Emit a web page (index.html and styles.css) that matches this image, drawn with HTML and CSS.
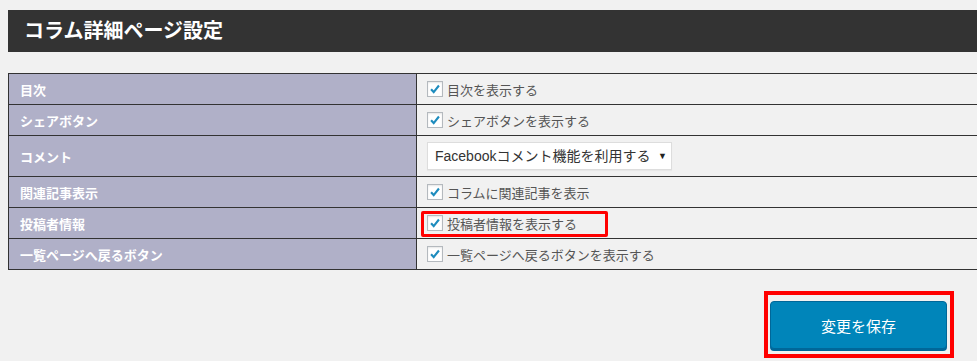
FILE: index.html
```html
<!DOCTYPE html>
<html lang="ja">
<head>
  <meta charset="UTF-8" />
  <title>コラム詳細ページ設定</title>
  <link rel="stylesheet" href="styles.css">
</head>
<body>

<div class="page">
  <h2 class="page-title">コラム詳細ページ設定</h2>

  <table class="settings">
    <tr>
      <th>目次</th>
      <td><label class="check"><span class="box"><svg viewBox="0 0 16 16"><path d="M3.5 8.2l3 3.3 6-7.5" /></svg></span>目次を表示する</label></td>
    </tr>
    <tr>
      <th>シェアボタン</th>
      <td><label class="check"><span class="box"><svg viewBox="0 0 16 16"><path d="M3.5 8.2l3 3.3 6-7.5" /></svg></span>シェアボタンを表示する</label></td>
    </tr>
    <tr class="tall">
      <th>コメント</th>
      <td>
        <div class="select">Facebookコメント機能を利用する<span class="arrow">▼</span></div>
      </td>
    </tr>
    <tr>
      <th>関連記事表示</th>
      <td><label class="check"><span class="box"><svg viewBox="0 0 16 16"><path d="M3.5 8.2l3 3.3 6-7.5" /></svg></span>コラムに関連記事を表示</label></td>
    </tr>
    <tr>
      <th>投稿者情報</th>
      <td class="marked">
        <span class="mark"></span>
        <label class="check"><span class="box"><svg viewBox="0 0 16 16"><path d="M3.5 8.2l3 3.3 6-7.5" /></svg></span>投稿者情報を表示する</label>
      </td>
    </tr>
    <tr>
      <th>一覧ページへ戻るボタン</th>
      <td><label class="check"><span class="box"><svg viewBox="0 0 16 16"><path d="M3.5 8.2l3 3.3 6-7.5" /></svg></span>一覧ページへ戻るボタンを表示する</label></td>
    </tr>
  </table>

  <div class="actions">
    <div class="save-mark">
      <button class="save">変更を保存</button>
    </div>
  </div>
</div>

</body>
</html>
```

FILE: styles.css
```css
body {
  margin: 0;
  background: #f1f1f1;
  font-family: "Liberation Sans", "Noto Sans CJK JP", sans-serif;
  overflow: hidden;
}

.page {
  width: 1100px;
  padding: 10px 0 0 8px;
}

.page-title {
  margin: 0;
  height: 42px;
  line-height: 42px;
  padding-left: 16px;
  background: #333;
  color: #fff;
  font-size: 20px;
  font-weight: bold;
}

.settings {
  margin-top: 21px;
  width: 1100px;
  border-collapse: collapse;
  border: 1px solid #333;
}

.settings th,
.settings td {
  height: 30px;
  padding: 0;
  border: 1px solid #333;
  font-size: 13px;
}

.settings th {
  width: 396px;
  padding-left: 11px;
  text-align: left;
  background: #b0b0c8;
  color: #fff;
  font-weight: bold;
}

.settings td {
  padding-left: 10px;
  color: #555;
}

.settings tr.tall th,
.settings tr.tall td {
  height: 40px;
}

.check {
  display: flex;
  align-items: center;
  gap: 4px;
}

.box {
  width: 14px;
  height: 14px;
  border: 1px solid #b4b9be;
  background: #fff;
  box-shadow: inset 0 1px 2px rgba(0, 0, 0, 0.1);
  display: flex;
}

.box svg {
  width: 14px;
  height: 14px;
  fill: none;
  stroke: #1e8cbe;
  stroke-width: 2.4;
}

.select {
  position: relative;
  width: 236px;
  height: 26px;
  line-height: 26px;
  padding-left: 7px;
  border: 1px solid #ddd;
  background: #fff;
  color: #333;
  font-size: 14px;
  box-shadow: 0 1px 1px rgba(0, 0, 0, 0.04);
}

.select .arrow {
  position: absolute;
  right: 4px;
  top: 0;
  font-size: 9px;
  color: #222;
}

.marked {
  position: relative;
}

.mark {
  position: absolute;
  left: 4px;
  top: 3px;
  width: 181px;
  height: 20px;
  border: 3px solid #f00;
  border-radius: 2px;
}

.actions {
  width: 946px;
  margin-top: 21px;
  display: flex;
  justify-content: flex-end;
}

.save-mark {
  border: 4px solid #f00;
  padding: 6px 3px 5px 2px;
}

.save {
  display: block;
  width: 177px;
  height: 48px;
  border: 1px solid #006799;
  border-radius: 4px;
  background: #0085ba;
  box-shadow: 0 2px 0 #006799;
  color: #fff;
  font-family: "Noto Sans CJK JP", sans-serif;
  font-size: 15px;
  cursor: pointer;
}
```
